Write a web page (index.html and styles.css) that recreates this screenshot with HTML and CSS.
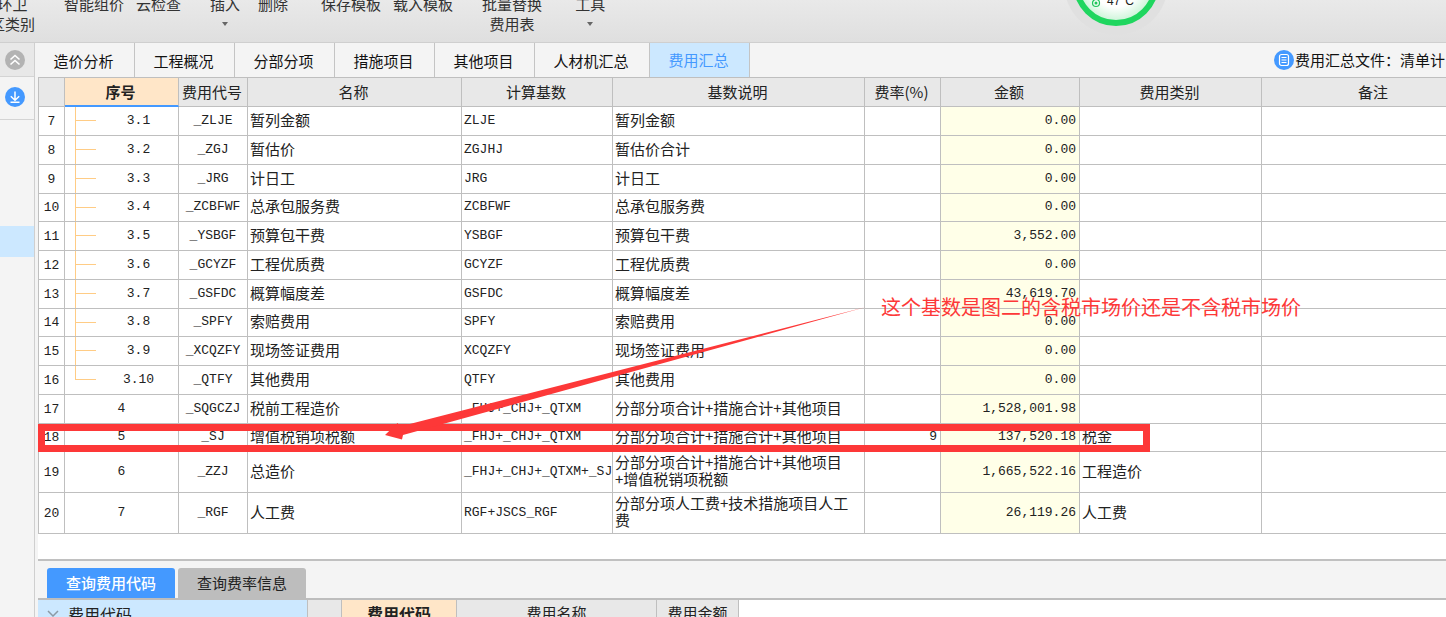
FILE: index.html
```html
<!DOCTYPE html>
<html lang="zh-CN">
<head>
<meta charset="utf-8">
<title>费用汇总</title>
<link rel="stylesheet" href="styles.css">
</head>
<body>
<div class="app">
  <header class="ribbon">
    <button class="tool tool-cut">环卫<br>区类别</button>
    <button class="tool gap-m">智能组价<br>&nbsp;</button>
    <button class="tool">云检查<br>&nbsp;</button>
    <button class="tool gap-m">插入<span class="drop"><i class="caret"></i></span></button>
    <button class="tool gap-s">删除<br>&nbsp;</button>
    <button class="tool gap-l">保存模板<br>&nbsp;</button>
    <button class="tool">载入模板<br>&nbsp;</button>
    <button class="tool gap-m">批量替换<br>费用表</button>
    <button class="tool gap-l">工具<span class="drop"><i class="caret"></i></span></button>
  </header>

  <div class="body">
    <aside class="rail">
      <button class="rail-btn rail-collapse" aria-label="收起">
        <svg width="20" height="20" viewBox="0 0 20 20"><circle cx="10" cy="10" r="10" fill="#b3b3b3"/><path d="M5.5 9.5 10 5.5l4.500 4M5.500 14.500 10 10.500l4.500 4" fill="none" stroke="#fff" stroke-width="1.600"/></svg>
      </button>
      <button class="rail-btn rail-down" aria-label="下载">
        <svg width="20" height="20" viewBox="0 0 20 20"><circle cx="10" cy="10" r="10" fill="#4499ff"/><path d="M10 4.500v8.500M5.800 9.300 10 13.300l4.200-4M5.500 15.200h9" fill="none" stroke="#fff" stroke-width="1.500"/></svg>
      </button>
      <div class="rail-selected"></div>
    </aside>

    <main class="main">
      <nav class="tabs">
        <button class="tab">造价分析</button>
        <button class="tab">工程概况</button>
        <button class="tab">分部分项</button>
        <button class="tab">措施项目</button>
        <button class="tab">其他项目</button>
        <button class="tab tab-wide">人材机汇总</button>
        <button class="tab tab-active">费用汇总</button>
        <div class="file">
          <svg width="20" height="20" viewBox="0 0 20 20"><circle cx="10" cy="10" r="10" fill="#4499ff"/><rect x="5.500" y="4.500" width="9" height="11" rx="2" fill="none" stroke="#fff" stroke-width="1.200"/><path d="M7.500 7.500h5M7.500 10h5M7.500 12.500h5" stroke="#fff"/></svg>
          <span>费用汇总文件：清单计</span>
        </div>
      </nav>

      <section class="sheet">
        <table class="grid">
          <colgroup><col class="c-row"><col class="c-seq"><col class="c-code"><col class="c-name"><col class="c-base"><col class="c-desc"><col class="c-rate"><col class="c-sum"><col class="c-type"><col></colgroup>
          <thead>
            <tr><th></th><th class="sorted">序号</th><th>费用代号</th><th>名称</th><th>计算基数</th><th>基数说明</th><th>费率(%)</th><th>金额</th><th>费用类别</th><th>备注</th></tr>
          </thead>
          <tbody>
            <tr><td class="row">7</td><td class="seq child">3.1</td><td class="code">_ZLJE</td><td>暂列金额</td><td class="mono">ZLJE</td><td>暂列金额</td><td></td><td class="sum">0.00</td><td></td><td></td></tr>
            <tr><td class="row">8</td><td class="seq child">3.2</td><td class="code">_ZGJ</td><td>暂估价</td><td class="mono">ZGJHJ</td><td>暂估价合计</td><td></td><td class="sum">0.00</td><td></td><td></td></tr>
            <tr><td class="row">9</td><td class="seq child">3.3</td><td class="code">_JRG</td><td>计日工</td><td class="mono">JRG</td><td>计日工</td><td></td><td class="sum">0.00</td><td></td><td></td></tr>
            <tr><td class="row">10</td><td class="seq child">3.4</td><td class="code">_ZCBFWF</td><td>总承包服务费</td><td class="mono">ZCBFWF</td><td>总承包服务费</td><td></td><td class="sum">0.00</td><td></td><td></td></tr>
            <tr><td class="row">11</td><td class="seq child">3.5</td><td class="code">_YSBGF</td><td>预算包干费</td><td class="mono">YSBGF</td><td>预算包干费</td><td></td><td class="sum">3,552.00</td><td></td><td></td></tr>
            <tr><td class="row">12</td><td class="seq child">3.6</td><td class="code">_GCYZF</td><td>工程优质费</td><td class="mono">GCYZF</td><td>工程优质费</td><td></td><td class="sum">0.00</td><td></td><td></td></tr>
            <tr><td class="row">13</td><td class="seq child">3.7</td><td class="code">_GSFDC</td><td>概算幅度差</td><td class="mono">GSFDC</td><td>概算幅度差</td><td></td><td class="sum">43,619.70</td><td></td><td></td></tr>
            <tr><td class="row">14</td><td class="seq child">3.8</td><td class="code">_SPFY</td><td>索赔费用</td><td class="mono">SPFY</td><td>索赔费用</td><td></td><td class="sum">0.00</td><td></td><td></td></tr>
            <tr><td class="row">15</td><td class="seq child">3.9</td><td class="code">_XCQZFY</td><td>现场签证费用</td><td class="mono">XCQZFY</td><td>现场签证费用</td><td></td><td class="sum">0.00</td><td></td><td></td></tr>
            <tr><td class="row">16</td><td class="seq child child-last">3.10</td><td class="code">_QTFY</td><td>其他费用</td><td class="mono">QTFY</td><td>其他费用</td><td></td><td class="sum">0.00</td><td></td><td></td></tr>
            <tr><td class="row">17</td><td class="seq">4</td><td class="code">_SQGCZJ</td><td>税前工程造价</td><td class="mono">_FHJ+_CHJ+_QTXM</td><td>分部分项合计+措施合计+其他项目</td><td></td><td class="sum">1,528,001.98</td><td></td><td></td></tr>
            <tr><td class="row">18</td><td class="seq">5</td><td class="code">_SJ</td><td>增值税销项税额</td><td class="mono">_FHJ+_CHJ+_QTXM</td><td>分部分项合计+措施合计+其他项目</td><td class="rate">9</td><td class="sum">137,520.18</td><td>税金</td><td></td></tr>
            <tr class="tall"><td class="row">19</td><td class="seq">6</td><td class="code">_ZZJ</td><td>总造价</td><td class="mono">_FHJ+_CHJ+_QTXM+_SJ</td><td>分部分项合计+措施合计+其他项目<br>+增值税销项税额</td><td></td><td class="sum">1,665,522.16</td><td>工程造价</td><td></td></tr>
            <tr class="tall"><td class="row">20</td><td class="seq">7</td><td class="code">_RGF</td><td>人工费</td><td class="mono">RGF+JSCS_RGF</td><td>分部分项人工费+技术措施项目人工<br>费</td><td></td><td class="sum">26,119.26</td><td>人工费</td><td></td></tr>
          </tbody>
        </table>
      </section>

      <section class="query">
        <div class="query-tabs">
          <button class="query-tab query-active">查询费用代码</button>
          <button class="query-tab">查询费率信息</button>
        </div>
        <div class="query-body">
          <div class="tree">
            <svg width="12" height="8" viewBox="0 0 12 8"><path d="M1 1l5 5 5-5" fill="none" stroke="#8c9aa5" stroke-width="1.500"/></svg>
            <span>费用代码</span>
          </div>
          <table class="codes">
            <colgroup><col class="q-row"><col class="q-code"><col class="q-name"><col class="q-sum"></colgroup>
            <thead><tr><th></th><th class="sorted-soft">费用代码</th><th>费用名称</th><th>费用金额</th></tr></thead>
          </table>
        </div>
      </section>
    </main>
  </div>

  <svg class="gauge" width="112" height="40" viewBox="0 0 112 40">
    <defs><radialGradient id="glow"><stop offset="0.600" stop-color="#ffffff"/><stop offset="1" stop-color="#c5f3d3"/></radialGradient></defs>
    <circle cx="56" cy="-17" r="52" fill="#e0e0e0"/>
    <circle cx="56" cy="-17" r="40" fill="url(#glow)" stroke="#1fd65f" stroke-width="6"/>
    <circle cx="36" cy="3" r="3.500" fill="none" stroke="#1fc65a" stroke-width="1.200"/>
    <circle cx="36" cy="3" r="1.500" fill="#1fc65a"/>
    <path d="M34 0v-4M38 0v-4" stroke="#1fc65a"/>
    <text x="47" y="5" class="gauge-text">47°C</text>
  </svg>

  <svg class="mark" width="1160" height="470" viewBox="0 0 1160 470">
    <rect x="41.500" y="427.500" width="1105" height="21" fill="none" stroke="#fd3838" stroke-width="7"/>
    <path d="M385 435 397.500 423 400 426.500 866 307 403 435 402 439.500Z" fill="#fd3838"/>
  </svg>
  <p class="note">这个基数是图二的含税市场价还是不含税市场价</p>
</div>
</body>
</html>
```
FILE: styles.css
```css
* { box-sizing: border-box; }

body {
  margin: 0;
  font: 15px/20px "Noto Sans CJK SC", sans-serif;
  color: #222;
  background: #f4f4f4;
}

button {
  font: inherit;
  color: inherit;
  border: 0;
  padding: 0;
  background: none;
}

svg { display: block; }

.app {
  position: relative;
  display: flex;
  flex-direction: column;
  height: 100vh;
  overflow: hidden;
}

/* Ribbon */
.ribbon {
  flex: none;
  display: flex;
  align-items: flex-end;
  gap: 12px;
  height: 43px;
  padding-bottom: 8px;
  overflow: hidden;
  background: linear-gradient(#e9e9e9, #dfdfdf);
  border-bottom: 1px solid #cfcfcf;
  color: #333;
}

.tool { flex: none; white-space: nowrap; }
.tool-cut { margin-left: -10px; }
.gap-s { margin-left: 6px; }
.gap-m { margin-left: 17px; }
.gap-l { margin-left: 21px; }

.drop {
  display: flex;
  justify-content: center;
  align-items: center;
  height: 20px;
}

.caret {
  border: 3px solid transparent;
  border-top: 4px solid #666;
  border-bottom: 0;
}

/* Side rail */
.body { flex: 1; display: flex; min-height: 0; }

.rail {
  flex: none;
  width: 35px;
  border-right: 1px solid #cfcfcf;
}

.rail-btn {
  display: flex;
  align-items: center;
  width: 100%;
  padding-left: 5px;
}

.rail-collapse { height: 34px; background: #e8e8e8; border-bottom: 1px solid #d4d4d4; }
.rail-down { height: 43px; padding-bottom: 2px; border-bottom: 1px solid #d4d4d4; }
.rail-selected { height: 31px; margin-top: 106px; background: #cce8ff; }

.main {
  flex: 1;
  min-width: 0;
  display: flex;
  flex-direction: column;
}

/* Page tabs */
.tabs {
  flex: none;
  display: flex;
  height: 34px;
  color: #111;
}

.tab {
  flex: none;
  width: 100px;
  padding: 1px 2px 0 0;
  border-right: 1px solid #c4c4c4;
}

.tab-wide { width: 115px; }
.tab-active { padding-top: 0; color: #4499ff; background: #cce8ff; }

.file {
  display: flex;
  align-items: center;
  gap: 1px;
  margin-left: auto;
  padding-right: 1px;
  white-space: nowrap;
}

/* Cost grid */
.sheet {
  flex: none;
  margin-left: 3px;
  padding-bottom: 25px;
  overflow: hidden;
  background: #fff;
  border-bottom: 2px solid #c0c0c0;
}

.grid {
  width: calc(100% + 41px);
  table-layout: fixed;
  border-spacing: 0;
  border-left: 1px solid #bfbfbf;
  border-top: 1px solid #bfbfbf;
}

.c-row { width: 26px; }
.c-seq { width: 114px; }
.c-code { width: 69px; }
.c-name { width: 214px; }
.c-base { width: 151px; }
.c-desc { width: 252px; }
.c-rate { width: 76px; }
.c-sum { width: 139px; }
.c-type { width: 182px; }

.grid th,
.grid td {
  padding: 0 3px 4px 2px;
  border-right: 1px solid #bfbfbf;
  border-bottom: 1px solid #bfbfbf;
  line-height: 17px;
  white-space: nowrap;
}

.grid th {
  height: 29px;
  padding: 0 2px 2px 0;
  font-weight: 400;
  background: #e8e8e8;
}

.grid th.sorted {
  padding-bottom: 0;
  font-weight: 700;
  background: #ffe6c8;
  border-bottom: 2px solid #4499ff;
}

.grid td { height: 29px; }
.grid tbody tr:nth-child(4n) td { height: 28px; }
.grid tbody .tall td { height: 41px; }

.grid .mono,
.grid .row,
.grid .seq,
.grid .code,
.grid .rate,
.grid .sum {
  padding-bottom: 2px;
  font-family: "Liberation Mono", monospace;
  font-size: 13px;
}

.grid .mono { padding-right: 0; }

.grid .row,
.grid .seq,
.grid .code { padding: 0 0 2px; text-align: center; }

.grid .row { padding-bottom: 0; }

.grid .rate,
.grid .sum { text-align: right; }

.grid .sum { background: #ffffe8; }

.grid .child {
  padding-left: 34px;
  background:
    linear-gradient(#ffcc85, #ffcc85) 10px 0 / 1px 100% no-repeat,
    linear-gradient(#ffcc85, #ffcc85) 11px 13px / 20px 1px no-repeat;
}

.grid .child-last { background-size: 1px 14px, 20px 1px; }

/* Query panel */
.query { flex: 1; display: flex; flex-direction: column; min-height: 0; margin-left: 3px; }

.query-tabs {
  display: flex;
  gap: 3px;
  padding: 7px 9px 0;
  border-bottom: 2px solid #bdbdbd;
}

.query-tab {
  width: 128px;
  height: 30px;
  border-radius: 3px 3px 0 0;
  background: #bdbdbd;
}

.query-active { color: #fff; font-weight: 500; background: #4499ff; }

.query-body { flex: 1; display: flex; align-items: flex-start; background: #fff; overflow: hidden; }

.tree {
  display: flex;
  align-items: center;
  gap: 9px;
  width: 270px;
  height: 28px;
  padding-left: 9px;
  font-size: 16px;
  background: #cce8ff;
  border-right: 1px solid #bfbfbf;
}

.codes { table-layout: fixed; width: 431px; border-spacing: 0; }
.q-row { width: 34px; }
.q-code { width: 115px; }
.q-name { width: 200px; }
.q-sum { width: 82px; }

.codes th {
  height: 26px;
  padding: 0;
  font-weight: 400;
  background: #e8e8e8;
  border-right: 1px solid #bfbfbf;
}

.codes th.sorted-soft { font-size: 16px; font-weight: 700; background: #ffe6c8; }

/* Floating layers */
.gauge { position: absolute; top: 0; right: 274px; }
.gauge-text { font: 12px "Liberation Sans", sans-serif; fill: #222; }

.mark { position: absolute; top: 0; left: 0; pointer-events: none; }

.note {
  position: absolute;
  top: 292px;
  left: 881px;
  margin: 0;
  font-size: 20px;
  line-height: 30px;
  color: #fd3838;
  white-space: nowrap;
}
```
